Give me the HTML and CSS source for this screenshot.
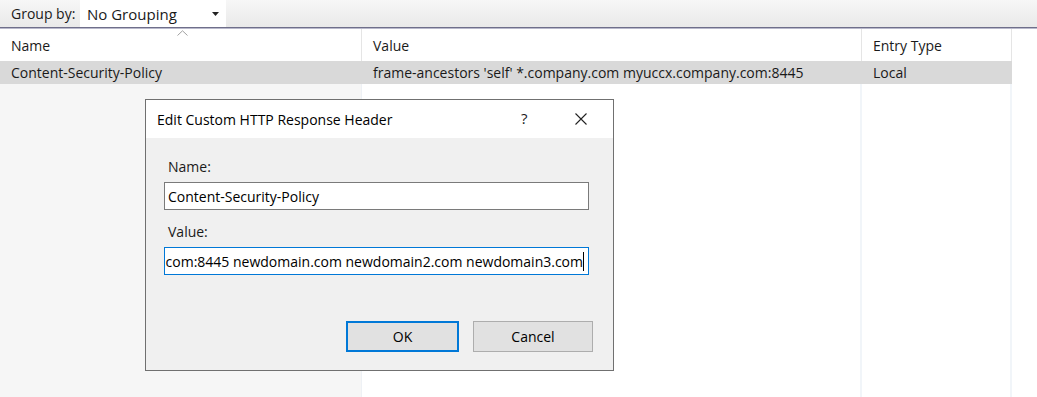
FILE: index.html
```html
<!DOCTYPE html>
<html>
<head>
<meta charset="utf-8">
<link rel="stylesheet" href="styles.css">
</head>
<body>
<div class="app">
  <div class="toolbar">
    <span class="group-label">Group by:</span>
    <div class="combo">
      <span>No Grouping</span>
      <svg class="combo-arrow" width="7" height="4" viewBox="0 0 7 4"><path d="M0 0h7L3.5 4z" fill="#222"/></svg>
    </div>
  </div>
  <div class="grid">
    <div class="head">
      <div class="hcell c1">Name<svg class="sort" width="11" height="6" viewBox="0 0 11 6"><path d="M0.5 5.5L5.5 0.8L10.5 5.5" fill="none" stroke="#a0a0a0" stroke-width="1"/></svg></div>
      <div class="hcell c2">Value</div>
      <div class="hcell c3">Entry Type</div>
      <div class="hcell c4"></div>
    </div>
    <div class="row selected">
      <div class="cell c1">Content-Security-Policy</div>
      <div class="cell c2">frame-ancestors 'self' *.company.com myuccx.company.com:8445</div>
      <div class="cell c3">Local</div>
      <div class="cell c4 blank"></div>
    </div>
    <div class="fill">
      <div class="fcol c1"></div>
      <div class="fcol c2"></div>
      <div class="fcol c3"></div>
      <div class="fcol c4"></div>
    </div>
  </div>

  <div class="dialog">
    <div class="titlebar">
      <span class="title">Edit Custom HTTP Response Header</span>
      <span class="help">?</span>
      <svg class="close" width="12" height="12" viewBox="0 0 12 12"><path d="M0.5 0.5L11.5 11.5M11.5 0.5L0.5 11.5" stroke="#222" stroke-width="1.1"/></svg>
    </div>
    <div class="dbody">
      <label class="lbl">Name:</label>
      <div class="input">Content-Security-Policy</div>
      <label class="lbl">Value:</label>
      <div class="input focused"><span class="scroll">frame-ancestors 'self' *.company.com myuccx.company.com:8445 newdomain.com newdomain2.com newdomain3.com</span><span class="caret"></span></div>
      <div class="buttons">
        <div class="btn default">OK</div>
        <div class="btn">Cancel</div>
      </div>
    </div>
  </div>
</div>
</body>
</html>
```

FILE: styles.css
```css
html, body {
  margin: 0;
  padding: 0;
  background: #ffffff;
}
body {
  font-family: "Open Sans", "Noto Sans", sans-serif;
  font-size: 14px;
  color: #1a1a1a;
  width: 1037px;
  height: 397px;
  overflow: hidden;
}
.app {
  position: relative;
  width: 1037px;
  height: 397px;
}
.toolbar {
  height: 27px;
  display: flex;
  align-items: stretch;
  background: linear-gradient(#f7f7f7, #e9e9e9);
  border-bottom: 1px solid #6f6f8a;
  box-shadow: 0 1px 0 #b9b9cc;
}
.group-label {
  padding-left: 11px;
  width: 69px;
  display: flex;
  align-items: center;
  font-size: 14px;
}
.combo {
  width: 146px;
  background: #ffffff;
  display: flex;
  align-items: center;
  padding-left: 7px;
  box-sizing: border-box;
  position: relative;
  font-size: 15px;
}
.combo-arrow {
  position: absolute;
  right: 7px;
  top: 12px;
}
.grid {
  display: flex;
  flex-direction: column;
  height: 369px;
  margin-top: 1px;
}
.head {
  display: flex;
  height: 32px;
}
.c1 { width: 362px; }
.c2 { width: 500px; }
.c3 { width: 150px; }
.c4 { flex: 1; }
.hcell {
  position: relative;
  box-sizing: border-box;
  padding-left: 11px;
  display: flex;
  align-items: center;
  border-right: 1px solid #e5e5e5;
}
.hcell.c4 { border-right: none; }
.sort {
  position: absolute;
  left: 177px;
  top: 1px;
}
.row {
  display: flex;
  height: 23px;
}
.row.selected .cell {
  background: #d9d9d9;
}
.row.selected .cell.blank {
  background: #ffffff;
}
.cell {
  box-sizing: border-box;
  padding-left: 11px;
  display: flex;
  align-items: center;
  white-space: nowrap;
  padding-bottom: 1px;
}
.fill {
  flex: 1;
  display: flex;
}
.fcol {
  box-sizing: border-box;
  border-right: 2px solid #f1f5f9;
}
.fcol.c1 { background: #f6f6f6; border-right: 1px solid #eef1f5; }
.fcol.c4 { border-right: none; }

.dialog {
  position: absolute;
  left: 145px;
  top: 99px;
  width: 469px;
  height: 272px;
  box-sizing: border-box;
  border: 1px solid #707070;
  background: #f0f0f0;
  display: flex;
  flex-direction: column;
}
.titlebar {
  height: 38px;
  background: #ffffff;
  display: flex;
  align-items: center;
  position: relative;
}
.title {
  padding-left: 11px;
  font-size: 14px;
  color: #000;
}
.help {
  position: absolute;
  left: 375px;
  top: 8px;
  font-size: 15px;
}
.close {
  position: absolute;
  left: 429px;
  top: 13px;
}
.dbody {
  flex: 1;
  display: flex;
  flex-direction: column;
  padding: 18px 0 0 18px;
}
.lbl {
  font-size: 14px;
  padding-left: 4px;
  height: 26px;
  line-height: 22px;
}
.input {
  width: 425px;
  height: 28px;
  box-sizing: border-box;
  border: 1px solid #7a7a7a;
  background: #ffffff;
  display: flex;
  align-items: center;
  padding-left: 3px;
  margin-bottom: 11px;
  white-space: nowrap;
  overflow: hidden;
  font-size: 14px;
  color: #000;
}
.input.focused {
  border-color: #0078d7;
  justify-content: flex-end;
  padding-right: 4px;
  padding-left: 0;
  position: relative;
}
.scroll {
  flex: none;
}
.caret {
  width: 1px;
  height: 19px;
  background: #000;
  flex: none;
}
.buttons {
  display: flex;
  gap: 14px;
  margin-top: 35px;
  margin-left: 182px;
}
.btn {
  width: 120px;
  height: 31px;
  box-sizing: border-box;
  border: 1px solid #adadad;
  background: #e1e1e1;
  display: flex;
  align-items: center;
  justify-content: center;
  font-size: 14px;
  color: #000;
}
.btn.default {
  width: 113px;
  border: 2px solid #0078d7;
}
```
